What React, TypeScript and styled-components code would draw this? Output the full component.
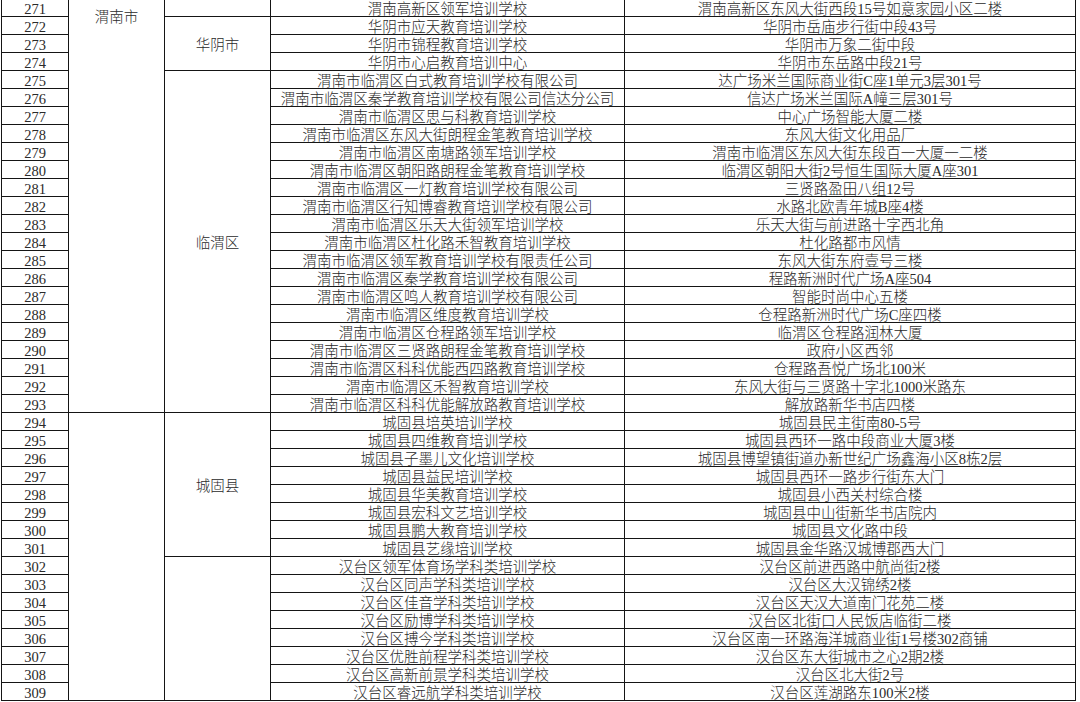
import React from "react";
import styled, { createGlobalStyle } from "styled-components";

const GlobalStyle = createGlobalStyle`
  html, body {
    margin: 0;
    padding: 0;
    background: #fff;
    overflow: hidden;
  }
`;

const Sheet = styled.div`
  display: grid;
  grid-template-columns: 67px 96px 106px 354px 451px;
  grid-auto-rows: 18px;
  width: max-content;
  margin: -2px 0 0 1px;
  border-top: 1px solid #151515;
  border-left: 1px solid #151515;
  font-family: "Liberation Serif", "Noto Sans CJK SC", serif;
  font-size: 14.5px;
  font-weight: 300;
  color: #2a2a2a;
`;

const Cell = styled.div<{ $col: number; $span?: number; $top?: boolean }>`
  box-sizing: border-box;
  grid-column: ${(p) => p.$col};
  grid-row: span ${(p) => p.$span ?? 1};
  border-right: 1px solid #151515;
  border-bottom: 1px solid #151515;
  display: flex;
  justify-content: center;
  align-items: ${(p) => (p.$top ? "flex-start" : "center")};
  padding-top: ${(p) => (p.$top ? "10px" : "2px")};
  line-height: 16px;
  white-space: nowrap;
  overflow: hidden;
`;

type Row = { no: number; school: string; address: string };

const rows: Row[] = [
  { no: 271, school: "渭南高新区领军培训学校", address: "渭南高新区东风大街西段15号如意家园小区二楼" },
  { no: 272, school: "华阴市应天教育培训学校", address: "华阴市岳庙步行街中段43号" },
  { no: 273, school: "华阴市锦程教育培训学校", address: "华阴市万象二街中段" },
  { no: 274, school: "华阴市心启教育培训中心", address: "华阴市东岳路中段21号" },
  { no: 275, school: "渭南市临渭区白式教育培训学校有限公司", address: "达广场米兰国际商业街C座1单元3层301号" },
  { no: 276, school: "渭南市临渭区秦学教育培训学校有限公司信达分公司", address: "信达广场米兰国际A幢三层301号" },
  { no: 277, school: "渭南市临渭区思与科教育培训学校", address: "中心广场智能大厦二楼" },
  { no: 278, school: "渭南市临渭区东风大街朗程金笔教育培训学校", address: "东风大街文化用品厂" },
  { no: 279, school: "渭南市临渭区南塘路领军培训学校", address: "渭南市临渭区东风大街东段百一大厦一二楼" },
  { no: 280, school: "渭南市临渭区朝阳路朗程金笔教育培训学校", address: "临渭区朝阳大街2号恒生国际大厦A座301" },
  { no: 281, school: "渭南市临渭区一灯教育培训学校有限公司", address: "三贤路盈田八组12号" },
  { no: 282, school: "渭南市临渭区行知博睿教育培训学校有限公司", address: "水路北欧青年城B座4楼" },
  { no: 283, school: "渭南市临渭区乐天大街领军培训学校", address: "乐天大街与前进路十字西北角" },
  { no: 284, school: "渭南市临渭区杜化路禾智教育培训学校", address: "杜化路都市风情" },
  { no: 285, school: "渭南市临渭区领军教育培训学校有限责任公司", address: "东风大街东府壹号三楼" },
  { no: 286, school: "渭南市临渭区秦学教育培训学校有限公司", address: "程路新洲时代广场A座504" },
  { no: 287, school: "渭南市临渭区鸣人教育培训学校有限公司", address: "智能时尚中心五楼" },
  { no: 288, school: "渭南市临渭区维度教育培训学校", address: "仓程路新洲时代广场C座四楼" },
  { no: 289, school: "渭南市临渭区仓程路领军培训学校", address: "临渭区仓程路润林大厦" },
  { no: 290, school: "渭南市临渭区三贤路朗程金笔教育培训学校", address: "政府小区西邻" },
  { no: 291, school: "渭南市临渭区科科优能西四路教育培训学校", address: "仓程路吾悦广场北100米" },
  { no: 292, school: "渭南市临渭区禾智教育培训学校", address: "东风大街与三贤路十字北1000米路东" },
  { no: 293, school: "渭南市临渭区科科优能解放路教育培训学校", address: "解放路新华书店四楼" },
  { no: 294, school: "城固县培英培训学校", address: "城固县民主街南80-5号" },
  { no: 295, school: "城固县四维教育培训学校", address: "城固县西环一路中段商业大厦3楼" },
  { no: 296, school: "城固县子墨儿文化培训学校", address: "城固县博望镇街道办新世纪广场鑫海小区8栋2层" },
  { no: 297, school: "城固县益民培训学校", address: "城固县西环一路步行街东大门" },
  { no: 298, school: "城固县华美教育培训学校", address: "城固县小西关村综合楼" },
  { no: 299, school: "城固县宏科文艺培训学校", address: "城固县中山街新华书店院内" },
  { no: 300, school: "城固县鹏大教育培训学校", address: "城固县文化路中段" },
  { no: 301, school: "城固县艺缘培训学校", address: "城固县金华路汉城博郡西大门" },
  { no: 302, school: "汉台区领军体育场学科类培训学校", address: "汉台区前进西路中航尚街2楼" },
  { no: 303, school: "汉台区同声学科类培训学校", address: "汉台区大汉锦绣2楼" },
  { no: 304, school: "汉台区佳音学科类培训学校", address: "汉台区天汉大道南门花苑二楼" },
  { no: 305, school: "汉台区励博学科类培训学校", address: "汉台区北街口人民饭店临街二楼" },
  { no: 306, school: "汉台区搏今学科类培训学校", address: "汉台区南一环路海洋城商业街1号楼302商铺" },
  { no: 307, school: "汉台区优胜前程学科类培训学校", address: "汉台区东大街城市之心2期2楼" },
  { no: 308, school: "汉台区高新前景学科类培训学校", address: "汉台区北大街2号" },
  { no: 309, school: "汉台区睿远航学科类培训学校", address: "汉台区莲湖路东100米2楼" },
];

// merged cells, keyed by the row number they start on
const cities: Record<number, { name: string; span: number; top?: boolean }> = {
  271: { name: "渭南市", span: 23, top: true },
  294: { name: "", span: 16 },
};

const districts: Record<number, { name: string; span: number }> = {
  271: { name: "", span: 1 },
  272: { name: "华阴市", span: 3 },
  275: { name: "临渭区", span: 19 },
  294: { name: "城固县", span: 8 },
  302: { name: "", span: 8 },
};

export default function App() {
  return (
    <>
      <GlobalStyle />
      <Sheet>
        {rows.map((r) => {
          const city = cities[r.no];
          const district = districts[r.no];
          return (
            <React.Fragment key={r.no}>
              <Cell $col={1}>{r.no}</Cell>
              {city ? (
                <Cell $col={2} $span={city.span} $top={city.top}>
                  {city.name}
                </Cell>
              ) : null}
              {district ? (
                <Cell $col={3} $span={district.span}>
                  {district.name}
                </Cell>
              ) : null}
              <Cell $col={4}>{r.school}</Cell>
              <Cell $col={5}>{r.address}</Cell>
            </React.Fragment>
          );
        })}
      </Sheet>
    </>
  );
}
